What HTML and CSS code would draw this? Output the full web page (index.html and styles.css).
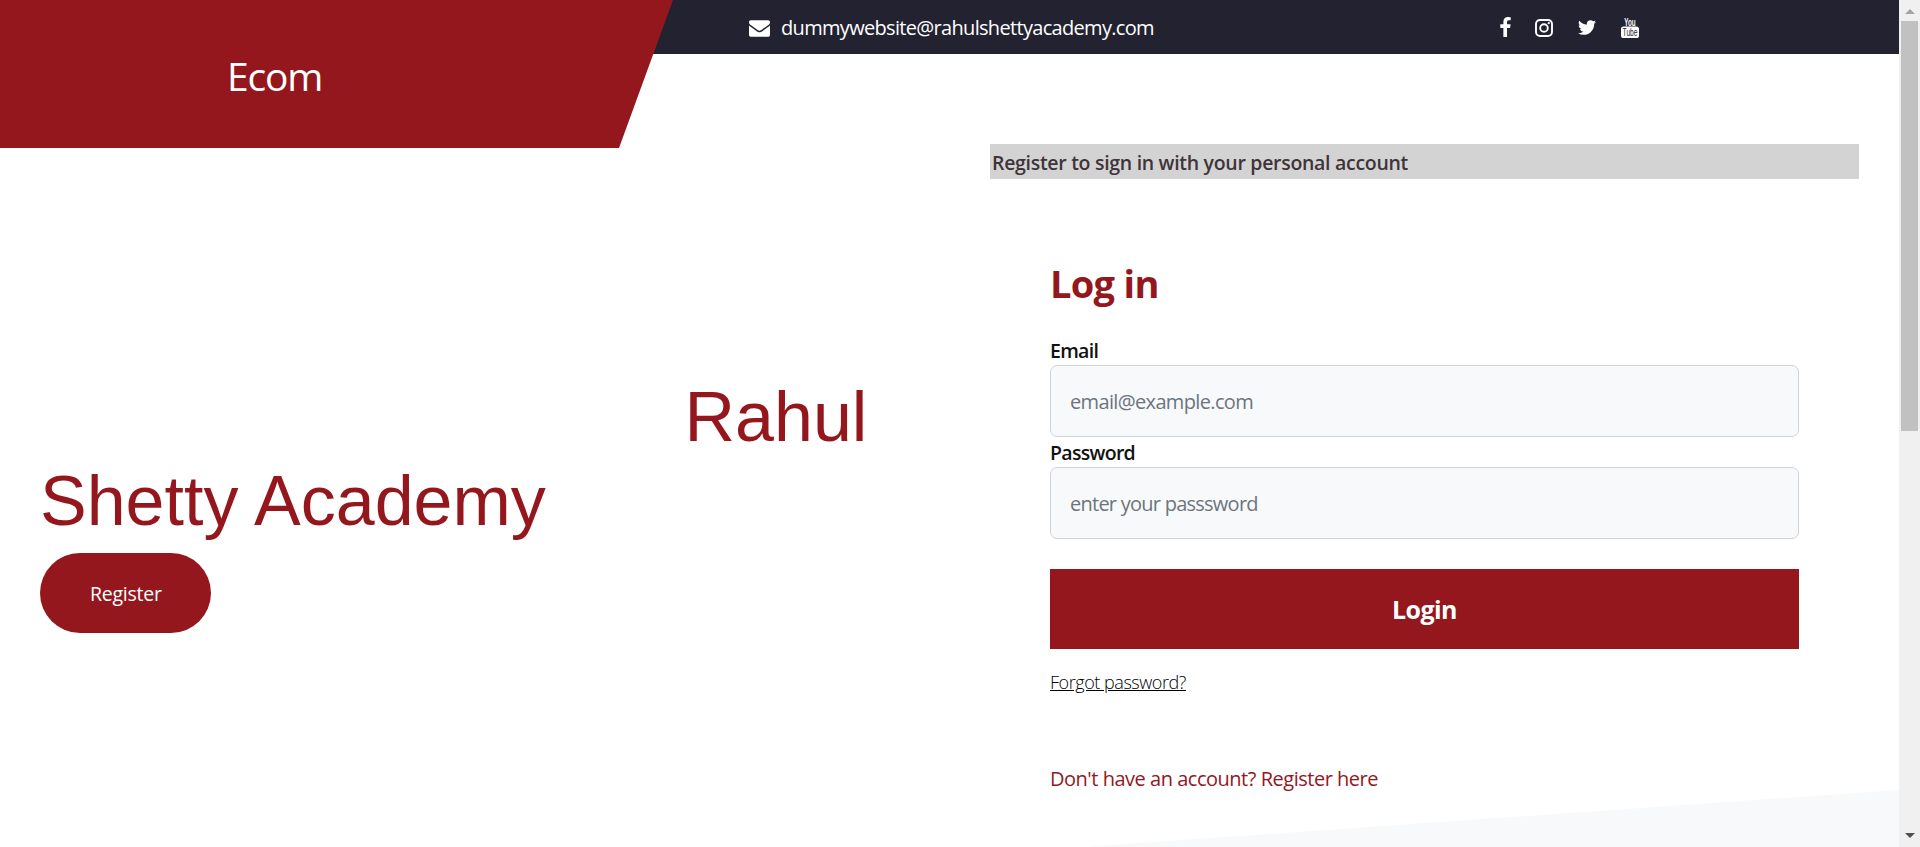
FILE: index.html
```html
<!DOCTYPE html>
<html lang="en">
<head>
<meta charset="utf-8">
<title>Ecom</title>
<link rel="stylesheet" href="styles.css">
</head>
<body>
<div class="viewport">
<div class="page">
  <header class="header">
    <div class="brand">Ecom</div>
    <div class="topbar">
      <a class="contact"><svg class="icon-mail" viewBox="0 256 1792 1408"><path d="M1792 710v794q0 66-47 113t-113 47h-1472q-66 0-113-47t-47-113v-794q44 49 101 87 362 246 497 345 57 42 92.500 65.500t94.500 48 110 24.500h2q51 0 110-24.500t94.500-48 92.500-65.500q170-123 498-345 57-39 100-87zm0-294q0 79-49 151t-122 123q-376 261-468 325-10 7-42.500 31t-54 38.500-52 32.500-57.500 27-50 9h-2q-23 0-50-9t-57.500-27-52-32.500-54-38.500-42.500-31q-91-64-262-182.500t-205-142.500q-62-42-117-115.500t-55-136.500q0-78 41.500-130t118.500-52h1472q65 0 112.500 47t47.500 113z"/></svg>dummywebsite@rahulshettyacademy.com</a>
      <nav class="social">
        <svg class="icon-fb" viewBox="479 0 864 1664"><path d="M1343 12v264h-157q-86 0-116 36t-30 108v189h293l-39 296h-254v759h-306v-759h-255v-296h255v-218q0-186 104-288.500t277-102.500q147 0 228 12z"/></svg>
        <svg class="icon-ig" viewBox="0 0 18 18"><rect x="1" y="1" width="16" height="16" rx="4" fill="none" stroke="#fff" stroke-width="1.900"/><circle cx="9" cy="9" r="3.800" fill="none" stroke="#fff" stroke-width="1.900"/><circle cx="13.800" cy="4.200" r="1.100"/></svg>
        <svg class="icon-tw" viewBox="108 256 1576 1280"><path d="M1684 408q-67 98-162 167 1 14 1 42 0 130-38 259.500t-115.500 248.500-184.500 210.500-258 146-323 54.500q-271 0-496-145 35 4 78 4 225 0 401-138-105-2-188-64.500t-114-159.500q33 5 61 5 43 0 85-11-112-23-185.500-111.500t-73.500-205.500v-4q68 38 146 41-66-44-105-115t-39-154q0-88 44-163 121 149 294.500 238.500t371.500 99.500q-8-38-8-74 0-134 94.500-228.500t228.500-94.500q140 0 236 102 109-21 205-78-37 115-142 178 93-10 186-50z"/></svg>
        <svg class="icon-yt" viewBox="0 0 18 21"><text x="3.300" y="8.600" textLength="11.400" lengthAdjust="spacingAndGlyphs">You</text><rect y="9.500" width="18" height="11.500" rx="2.600"/><text class="tube" x="1.600" y="19" textLength="14.800" lengthAdjust="spacingAndGlyphs">Tube</text></svg>
      </nav>
    </div>
  </header>
  <main class="columns">
    <section class="hero">
      <h1 class="headline">Rahul<br>Shetty Academy</h1>
      <a class="register">Register</a>
    </section>
    <section class="account">
      <p class="notice">Register to sign in with your personal account</p>
      <form class="login">
        <h2 class="title">Log in</h2>
        <label class="label" for="email">Email</label>
        <input class="field" id="email" type="email" placeholder="email@example.com">
        <label class="label" for="password">Password</label>
        <input class="field field-password" id="password" type="password" placeholder="enter your passsword">
        <button class="submit" type="button">Login</button>
        <a class="forgot">Forgot password?</a>
        <p class="signup">Don't have an account? Register here</p>
      </form>
    </section>
  </main>
  <svg class="slope" viewBox="0 0 817 57" preserveAspectRatio="none"><path d="M0 57L817 0V57Z"/></svg>
</div>
<div class="scrollbar"><i class="arrow-up"></i><i class="thumb"></i><i class="arrow-down"></i></div>
</div>
</body>
</html>
```
FILE: styles.css
```css
* { box-sizing: border-box; }
body { margin: 0; background: #fff; font-family: "Open Sans", "Noto Sans", sans-serif; overflow: hidden; }
h1, h2, p { margin: 0; font-weight: 400; }
svg { display: block; fill: #fff; flex: none; }

.viewport { display: grid; grid-template-columns: 1899px 21px; height: 847px; }
.page { position: relative; height: 847px; overflow: hidden; }

.header { display: flex; height: 144px; align-items: flex-start; }
.brand { flex: none; width: 673px; height: 148px; padding: 49px 0 0 227px; background: #94171e; clip-path: polygon(0 0, 100% 0, 619px 100%, 0 100%); color: #fff; font-size: 39px; letter-spacing: -1.200px; line-height: 54px; z-index: 1; }
.topbar { flex: 1; display: flex; height: 54px; margin-left: -53px; padding-left: 129px; background: #232230; color: #fff; }
.contact { display: flex; width: 751px; padding-top: 14px; font-size: 20px; letter-spacing: -0.680px; line-height: 27px; }
.icon-mail { width: 21px; height: 17px; margin: 6px 11px 0 0; }
.social { display: flex; padding-top: 17px; }
.icon-fb { width: 11px; height: 20px; margin-right: 24px; }
.icon-ig { width: 18px; height: 18px; margin: 2px 25px 0 0; }
.icon-tw { width: 18px; height: 15px; margin: 3px 25px 0 0; }
.icon-yt { width: 18px; height: 21px; overflow: visible; font: 700 11px "Liberation Sans", sans-serif; }
.tube { fill: #232230; font-size: 10.500px; font-weight: 400; }

.columns { display: flex; }
.hero { width: 990px; padding: 231px 0 0 40px; }
.headline { color: #94171e; font: 70px/84px "Liberation Sans", sans-serif; text-indent: 644.500px; }
.register { display: flex; width: 171px; height: 80px; margin-top: 10px; align-items: center; padding-left: 50px; border-radius: 40px; background: #94171e; color: #fff; font-size: 19.500px; letter-spacing: -0.250px; }

.account { width: 869px; }
.notice { height: 35px; padding: 5px 0 0 2px; background: #d3d3d3; color: #40343a; font-size: 19.500px; font-weight: 600; letter-spacing: -0.300px; line-height: 27px; }
.login { display: flex; flex-direction: column; padding: 77px 60px 0; }
.title { height: 81px; color: #94171e; font-size: 38px; font-weight: 700; letter-spacing: -0.700px; line-height: 54px; }
.label { height: 28px; color: #111; font-size: 19.500px; font-weight: 600; letter-spacing: -0.700px; line-height: 27px; }
.field { height: 72px; margin-bottom: 2px; padding: 0 19px; border: 1px solid #ced4da; border-radius: 7px; background: #f8f9fb; font: 20px "Open Sans", sans-serif; letter-spacing: -0.650px; }
.field-password { letter-spacing: -0.750px; }
.field::placeholder { color: #6c757d; }
.submit { height: 80px; margin-top: 28px; border: 0; background: #94171e; color: #fff; font: 700 25px "Open Sans", sans-serif; letter-spacing: -0.550px; }
.forgot { align-self: flex-start; margin-top: 20px; color: #000; font-size: 18px; font-weight: 350; letter-spacing: -0.450px; line-height: 26px; text-decoration: underline; }
.signup { margin-top: 70px; color: #94171e; font-size: 20px; letter-spacing: -0.480px; line-height: 28px; }

.slope { position: absolute; right: 0; bottom: 0; width: 817px; height: 57px; fill: #f8f9fb; z-index: -1; }

.scrollbar { display: flex; flex-direction: column; align-items: center; padding-top: 9px; background: #f0f0f0; }
.thumb { width: 17px; height: 410px; margin-top: 7px; background: #c1c1c1; }
.arrow-up { border: 5px solid transparent; border-top: 0; border-bottom-color: #a3a3a3; }
.arrow-down { margin-top: 402px; border: 5px solid transparent; border-bottom: 0; border-top-color: #505050; }
```
